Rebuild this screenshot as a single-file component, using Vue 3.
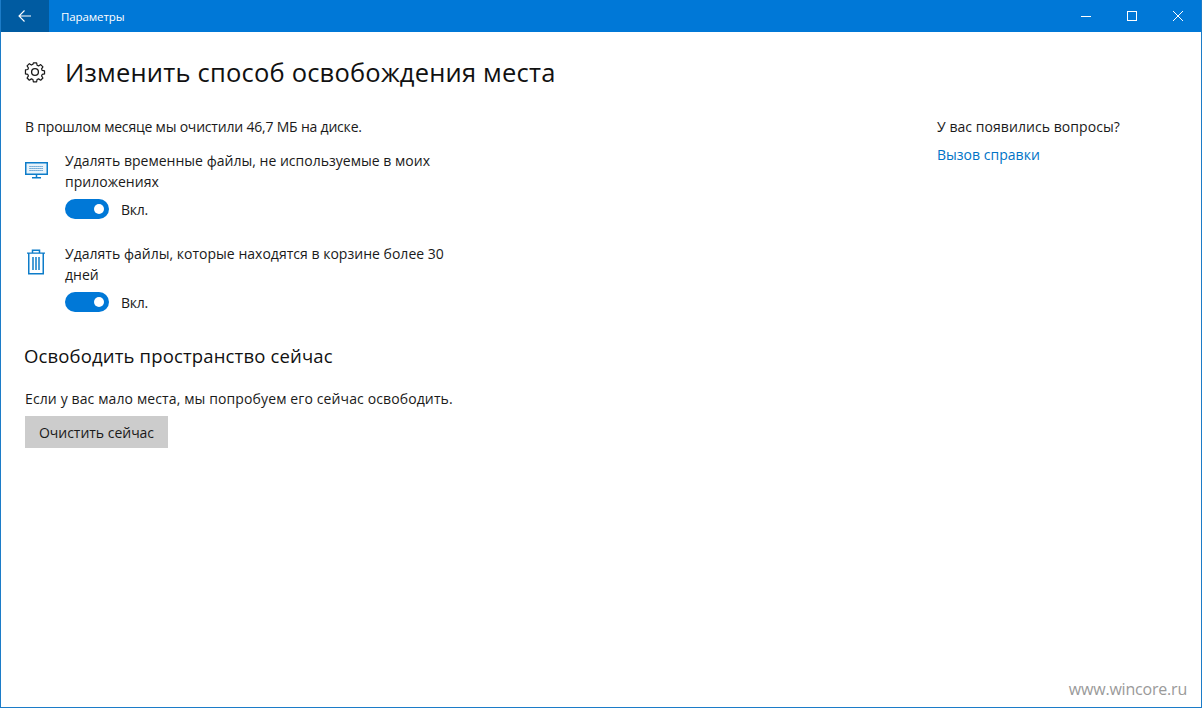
<script setup>
const options = [
  { id: 'temp', text: 'Удалять временные файлы, не используемые в моих приложениях', icon: 'monitor' },
  { id: 'trash', text: 'Удалять файлы, которые находятся в корзине более 30 дней', icon: 'trash' },
]
</script>

<template>
  <div class="window">
    <header class="titlebar">
      <button class="back" aria-label="Назад">
        <svg width="16" height="14" viewBox="0 0 16 14" fill="none" stroke="#fff" stroke-width="1.1"><path d="M14 7H2.5M7.5 1.5 2 7l5.5 5.5" /></svg>
      </button>
      <span class="app-title">Параметры</span>
      <div class="controls">
        <span class="ctl"><svg width="12" height="12" viewBox="0 0 12 12" stroke="#fff" fill="none"><path d="M1 6.5h10" /></svg></span>
        <span class="ctl"><svg width="12" height="12" viewBox="0 0 12 12" stroke="#fff" fill="none"><rect x="1.5" y="1.5" width="9" height="9" /></svg></span>
        <span class="ctl"><svg width="12" height="12" viewBox="0 0 12 12" stroke="#fff" fill="none"><path d="M1 1l10 10M11 1 1 11" /></svg></span>
      </div>
    </header>

    <main class="body">
      <section class="content">
        <div class="page-head">
          <svg class="gear" width="22" height="22" viewBox="0 0 22 22" fill="none" stroke="#1a1a1a" stroke-width="1.35" stroke-linejoin="round">
            <path d="M9.2 1.4h3.6l.5 2.6 1.7.8 2.3-1.5 2.5 2.5-1.5 2.3.7 1.7 2.6.5v3.4l-2.6.5-.7 1.7 1.5 2.3-2.5 2.5-2.3-1.5-1.7.7-.5 2.6H9.2l-.5-2.6-1.7-.7-2.3 1.5-2.5-2.5 1.5-2.3-.7-1.7-2.6-.5V9.3l2.6-.5.7-1.7-1.5-2.3 2.5-2.5L7 3.8l1.7-.8z" transform="translate(1.1 .6) scale(.9)" />
            <circle cx="11" cy="11" r="3.4" />
          </svg>
          <h1>Изменить способ освобождения места</h1>
        </div>

        <p class="summary">В прошлом месяце мы очистили 46,7 МБ на диске.</p>

        <div v-for="o in options" :key="o.id" class="option">
          <div class="opt-icon">
            <svg v-if="o.icon === 'monitor'" width="24" height="28" viewBox="0 0 24 28" fill="none" stroke="#0d7cc9" stroke-width="1.5">
              <rect x=".75" y="8.75" width="21.5" height="11.5" fill="#e8f3fb" />
              <path d="M11.5 20.5v3M7 23.75h9" />
              <path d="M4.5 12.5h14M4.5 14.5h14M4.5 16.5h14" stroke="#2a7fc0" stroke-width="1.1" stroke-dasharray="1.1 .9" />
            </svg>
            <svg v-else width="24" height="28" viewBox="0 0 24 28" fill="none" stroke="#0d7cc9" stroke-width="1.5">
              <path d="M2 6.75h18M7.5 6.5V3.75h7v2.75M3.75 6.75v22h14.5v-22" transform="translate(0 -.2) scale(1 .94)" />
              <path d="M8 10v13M11 10v13M14 10v13" />
            </svg>
          </div>
          <div class="opt-main">
            <div class="opt-text">{{ o.text }}</div>
            <div class="toggle-row">
              <span class="toggle"><span class="knob"></span></span>
              <span class="state">Вкл.</span>
            </div>
          </div>
        </div>

        <h2>Освободить пространство сейчас</h2>
        <p class="hint">Если у вас мало места, мы попробуем его сейчас освободить.</p>
        <button class="clean">Очистить сейчас</button>
      </section>

      <aside class="help">
        <div class="help-q">У вас появились вопросы?</div>
        <a class="help-link">Вызов справки</a>
      </aside>
    </main>

    <div class="watermark">www.wincore.ru</div>
  </div>
</template>

<style>
html, body { margin: 0; background: #fff; }
</style>

<style scoped>
.window {
  position: relative;
  box-sizing: border-box;
  width: 1202px;
  height: 708px;
  background: #fff;
  border: 1px solid #1c7cc8;
  border-top: 0;
  font-family: "Open Sans", "Noto Sans", sans-serif;
  font-size: 14px;
  color: #1a1a1a;
  overflow: hidden;
}
.titlebar {
  display: flex;
  align-items: center;
  height: 32px;
  background: #0078d7;
  color: #fff;
}
.back {
  display: flex;
  align-items: center;
  justify-content: center;
  width: 48px;
  height: 32px;
  padding: 0;
  border: 0;
  background: #005ba1;
}
.app-title { margin-left: 12px; font-size: 11.5px; letter-spacing: -.1px; }
.controls { display: flex; margin-left: auto; }
.ctl {
  display: flex;
  align-items: center;
  justify-content: center;
  width: 46px;
  height: 32px;
}
.body {
  display: flex;
  justify-content: space-between;
}
.content { padding-left: 24px; width: 640px; }
.page-head {
  display: flex;
  align-items: center;
  gap: 19px;
  height: 36px;
  margin-top: 22px;
}
.gear { margin-left: -1px; }
h1 {
  margin: 0;
  font-size: 25.5px;
  font-weight: 400;
  letter-spacing: .2px;
  line-height: 36px;
  color: #111;
}
.summary { margin: 27px 0 0; line-height: 20px; letter-spacing: -.2px; }
.option { display: flex; margin-top: 13px; }
.option + .option { margin-top: 24px; }
.opt-icon { width: 40px; padding-top: 4px; flex: none; }
.opt-main { width: 386px; }
.opt-text { line-height: 21px; letter-spacing: .02px; }
.toggle-row { display: flex; align-items: center; gap: 12px; margin-top: 7px; }
.toggle {
  display: flex;
  align-items: center;
  justify-content: flex-end;
  box-sizing: border-box;
  width: 44px;
  height: 20px;
  padding-right: 5px;
  border-radius: 10px;
  background: #0078d7;
}
.knob { width: 10px; height: 10px; border-radius: 50%; background: #fff; }
.state { letter-spacing: -.3px; }
h2 {
  margin: 31px 0 0 -1px;
  font-size: 18.5px;
  font-weight: 400;
  line-height: 26px;
  letter-spacing: .15px;
  color: #111;
}
.hint { margin: 20px 0 0; line-height: 20px; letter-spacing: .12px; }
.clean {
  display: block;
  width: 143px;
  height: 32px;
  margin-top: 7px;
  padding: 0;
  border: 0;
  background: #cccccc;
  font: inherit;
  color: #1a1a1a;
  letter-spacing: -.02px;
}
.help { width: 264px; padding-top: 85px; }
.help-q { line-height: 20px; letter-spacing: .06px; }
.help-link { display: block; margin-top: 8px; line-height: 20px; color: #0073c6; letter-spacing: .02px; }
.watermark {
  position: absolute;
  right: 14px;
  bottom: 7px;
  font-size: 16px;
  color: #9a9a9a;
  letter-spacing: -.2px;
}
</style>
